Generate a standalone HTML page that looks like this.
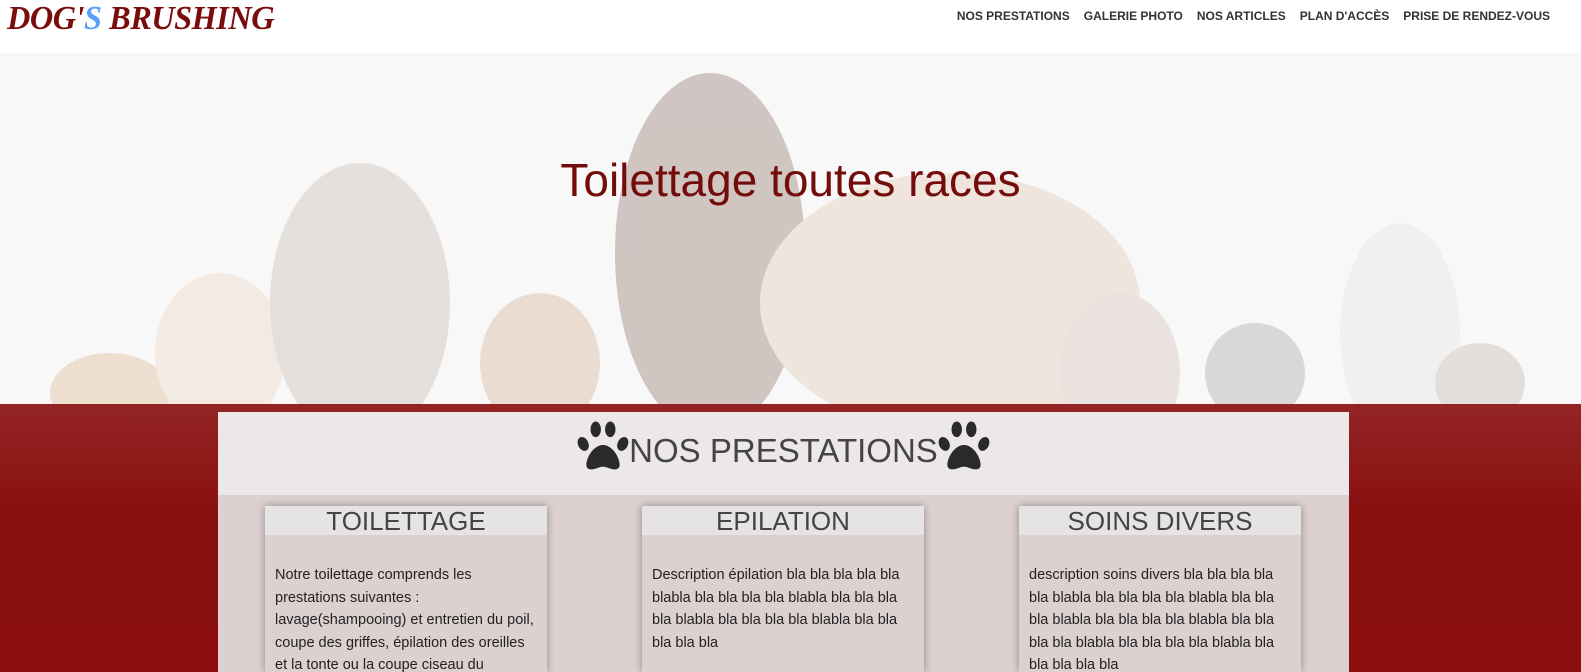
<!DOCTYPE html>
<html><head><meta charset="utf-8"><style>
*{margin:0;padding:0;box-sizing:border-box}
html,body{width:1581px;height:672px;overflow:hidden}
body{font-family:"Liberation Sans",sans-serif;background:#fff;position:relative}
.logo{position:absolute;left:7px;top:0px;font-family:"Liberation Serif",serif;font-style:italic;font-weight:bold;font-size:34px;color:#7a0c0c;letter-spacing:-0.5px;transform:scaleX(.95);transform-origin:left;white-space:nowrap}
.logo span{color:#5aa0f5}
nav{position:absolute;right:31px;top:9px;font-size:12px;font-weight:bold;color:#333}
nav a{margin-left:14px}
.hero{position:absolute;left:0;top:53px;width:1581px;height:352px;background:#f8f8f8;overflow:hidden}
.hero h1{position:absolute;top:100px;width:100%;text-align:center;font-weight:normal;font-size:46px;color:#740c0c}
.red{position:absolute;left:0;top:404px;width:1581px;height:268px;background:linear-gradient(#942424,#8a1010 40%,#8b0f0f)}
.box{position:absolute;left:218px;top:412px;width:1131px;height:260px;background:#ddd0d0;overflow:hidden}
.bh{height:83px;background:#ede8e8;text-align:center;font-size:33px;color:#444;padding-top:20px}
.paw{display:inline-block;vertical-align:middle;margin-top:-14px}
.card{position:absolute;top:94px;width:282px;height:166px;background:#ddd0d0;box-shadow:0 0 8px rgba(0,0,0,.35);overflow:hidden}
.card h2{height:29px;background:#e6e3e4;text-align:center;font-weight:normal;font-size:26px;color:#444;line-height:31px}
.card p{padding:29px 10px 0 10px;font-size:14.5px;line-height:22.5px;color:#222}
</style></head><body>
<div class="logo">DOG'<span>S</span> BRUSHING</div>
<nav><a>NOS PRESTATIONS</a><a>GALERIE PHOTO</a><a>NOS ARTICLES</a><a>PLAN D'ACCÈS</a><a>PRISE DE RENDEZ-VOUS</a></nav>
<div class="hero">
<svg width="1581" height="352" style="position:absolute;left:0;top:0">
<g opacity=".45">
<ellipse cx="110" cy="340" rx="60" ry="40" fill="#d8a070"/>
<ellipse cx="220" cy="300" rx="65" ry="80" fill="#e7c8b0"/>
<ellipse cx="360" cy="250" rx="90" ry="140" fill="#b9a69a"/>
<ellipse cx="540" cy="310" rx="60" ry="70" fill="#c99a70"/>
<ellipse cx="710" cy="200" rx="95" ry="180" fill="#6e4a40"/>
<ellipse cx="950" cy="250" rx="190" ry="130" fill="#d9b999"/>
<ellipse cx="1120" cy="320" rx="60" ry="80" fill="#c9ada0"/>
<ellipse cx="1255" cy="320" rx="50" ry="50" fill="#8a8a8a"/>
<ellipse cx="1400" cy="280" rx="60" ry="110" fill="#dedede"/>
<ellipse cx="1480" cy="330" rx="45" ry="40" fill="#b0a090"/>
</g>
<rect width="1581" height="352" fill="#f8f8f8" opacity=".35"/>
</svg>
<h1>Toilettage toutes races</h1>
</div>
<div class="red"></div>
<div class="box">
<div class="bh"><svg class="paw" width="52" height="52" viewBox="0 0 50 50" fill="#2a2a2a"><ellipse cx="18" cy="9" rx="5" ry="7.5"/><ellipse cx="32" cy="9" rx="5" ry="7.5"/><ellipse cx="6" cy="23" rx="5" ry="7" transform="rotate(-25 6 23)"/><ellipse cx="44" cy="23" rx="5" ry="7" transform="rotate(25 44 23)"/><path d="M25 24c-9 0-16 12-16 19 0 5 5 5 8 4 4-1 5-2 8-2s4 1 8 2c3 1 8 1 8-4 0-7-7-19-16-19z"/></svg>NOS PRESTATIONS<svg class="paw" width="52" height="52" viewBox="0 0 50 50" fill="#2a2a2a"><ellipse cx="18" cy="9" rx="5" ry="7.5"/><ellipse cx="32" cy="9" rx="5" ry="7.5"/><ellipse cx="6" cy="23" rx="5" ry="7" transform="rotate(-25 6 23)"/><ellipse cx="44" cy="23" rx="5" ry="7" transform="rotate(25 44 23)"/><path d="M25 24c-9 0-16 12-16 19 0 5 5 5 8 4 4-1 5-2 8-2s4 1 8 2c3 1 8 1 8-4 0-7-7-19-16-19z"/></svg></div>
<div class="card" style="left:47px"><h2>TOILETTAGE</h2><p>Notre toilettage comprends les prestations suivantes : lavage(shampooing) et entretien du poil, coupe des griffes, épilation des oreilles et la tonte ou la coupe ciseau du</p></div>
<div class="card" style="left:424px"><h2>EPILATION</h2><p>Description épilation bla bla bla bla bla blabla bla bla bla bla blabla bla bla bla bla blabla bla bla bla bla blabla bla bla bla bla bla</p></div>
<div class="card" style="left:801px"><h2>SOINS DIVERS</h2><p>description soins divers bla bla bla bla bla blabla bla bla bla bla blabla bla bla bla blabla bla bla bla bla blabla bla bla bla bla blabla bla bla bla bla blabla bla bla bla bla bla</p></div>
</div>
</body></html>
